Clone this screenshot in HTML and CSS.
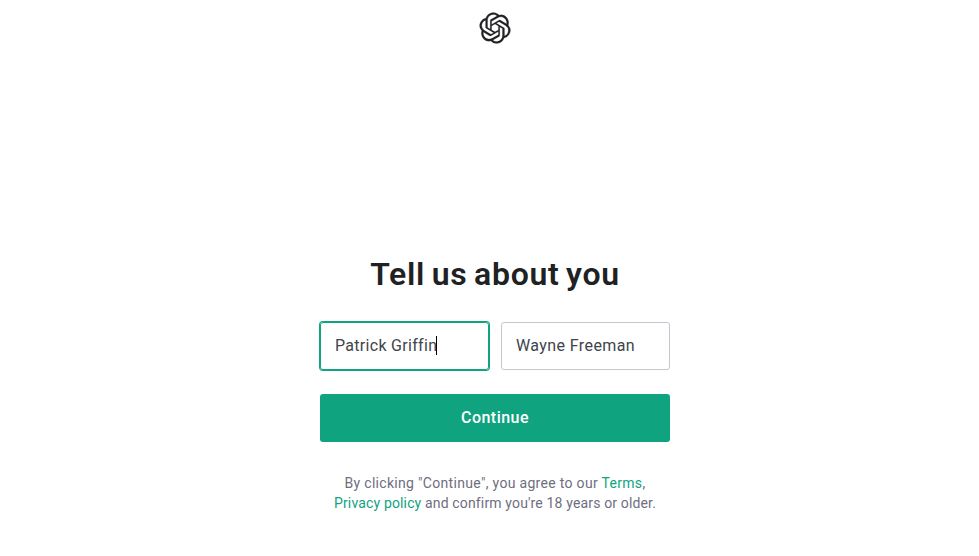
FILE: index.html
```html
<!DOCTYPE html>
<html lang="en">
<head>
    <meta charset="UTF-8">
    <meta name="viewport" content="width=device-width, initial-scale=1.0">
    <title>Tell us about you</title>
    <link rel="stylesheet" href="styles.css">
</head>
<body>
    <header class="header">
        <svg class="logo" viewBox="0 0 24 24" fill="currentColor" aria-hidden="true">
            <path d="M22.2819 9.8211a5.9847 5.9847 0 0 0-.5157-4.9108 6.0462 6.0462 0 0 0-6.5098-2.9A6.0651 6.0651 0 0 0 4.9807 4.1818a5.9847 5.9847 0 0 0-3.9977 2.9 6.0462 6.0462 0 0 0 .7427 7.0966 5.98 5.98 0 0 0 .511 4.9107 6.051 6.051 0 0 0 6.5146 2.9001A5.9847 5.9847 0 0 0 13.2599 24a6.0557 6.0557 0 0 0 5.7718-4.2058 5.9894 5.9894 0 0 0 3.9977-2.9001 6.0557 6.0557 0 0 0-.7475-7.0729zm-9.022 12.6081a4.4755 4.4755 0 0 1-2.8764-1.0408l.1419-.0804 4.7783-2.7582a.7948.7948 0 0 0 .3927-.6813v-6.7369l2.02 1.1686a.071.071 0 0 1 .038.052v5.5826a4.504 4.504 0 0 1-4.4945 4.4944zm-9.6607-4.1254a4.4708 4.4708 0 0 1-.5346-3.0137l.142.0852 4.783 2.7582a.7712.7712 0 0 0 .7806 0l5.8428-3.3685v2.3324a.0804.0804 0 0 1-.0332.0615L9.74 19.9502a4.4992 4.4992 0 0 1-6.1408-1.6464zM2.3408 7.8956a4.485 4.485 0 0 1 2.3655-1.9728V11.6a.7664.7664 0 0 0 .3879.6765l5.8144 3.3543-2.0201 1.1685a.0757.0757 0 0 1-.071 0l-4.8303-2.7865A4.504 4.504 0 0 1 2.3408 7.872zm16.5963 3.8558L13.1038 8.364 15.1192 7.2a.0757.0757 0 0 1 .071 0l4.8303 2.7913a4.4944 4.4944 0 0 1-.6765 8.1042v-5.6772a.79.79 0 0 0-.407-.667zm2.0107-3.0231l-.142-.0852-4.7735-2.7818a.7759.7759 0 0 0-.7854 0L9.409 9.2297V6.8974a.0662.0662 0 0 1 .0284-.0615l4.8303-2.7866a4.4992 4.4992 0 0 1 6.6802 4.66zM8.3065 12.863l-2.02-1.1638a.0804.0804 0 0 1-.038-.0567V6.0742a4.4992 4.4992 0 0 1 7.3757-3.4537l-.142.0805L8.704 5.459a.7948.7948 0 0 0-.3927.6813zm1.0976-2.3654l2.602-1.4998 2.6069 1.4998v2.9994l-2.5974 1.4997-2.6067-1.4997Z"/>
        </svg>
    </header>

    <main class="content">
        <h1 class="title">Tell us about you</h1>
        <form class="about-form">
            <div class="name-row">
                <div class="form-control focused">Patrick Griffin<span class="caret"></span></div>
                <div class="form-control last-name">Wayne Freeman</div>
            </div>
            <button type="button" class="btn-primary">Continue</button>
        </form>
        <p class="terms">
            <span class="terms-first">By clicking "Continue", you agree to our <a href="#">Terms</a>,</span><br>
            <span class="terms-second"><a href="#">Privacy policy</a> and confirm you're 18 years or older.</span>
        </p>
    </main>
</body>
</html>
```
FILE: styles.css
```css
* {
    box-sizing: border-box;
}

body {
    margin: 0;
    padding-left: 11px;
    background-color: #fff;
    color: #202123;
    font-family: Roboto, "Liberation Sans", sans-serif;
}

.header {
    display: flex;
    justify-content: center;
    height: 44px;
    padding-top: 12px;
}

.logo {
    width: 32px;
    height: 32px;
    padding: 0.5px;
    overflow: visible;
    stroke: currentColor;
    stroke-width: 0.15;
}

.content {
    width: 350px;
    margin: 210px auto 0;
}

.title {
    margin: 0;
    font-size: 32px;
    line-height: 40px;
    font-weight: 600;
    text-align: center;
    white-space: nowrap;
    letter-spacing: 0.7px;
    word-spacing: -2px;
}

.about-form {
    margin-top: 28px;
}

.name-row {
    display: grid;
    grid-template-columns: 169px 169px;
    justify-content: space-between;
}

.form-control {
    display: flex;
    align-items: center;
    height: 48px;
    padding: 0 14px 2px;
    border: 1px solid #c2c8d0;
    border-radius: 3px;
    color: #40444b;
    font-size: 16px;
    letter-spacing: 0.3px;
    white-space: nowrap;
}

.last-name {
    letter-spacing: 0.4px;
}

.focused {
    border-color: #10a37f;
    box-shadow: 0 0 0 1px #10a37f;
}

.caret {
    width: 1px;
    height: 19px;
    margin-left: -1px;
    background-color: #000;
}

.btn-primary {
    display: block;
    width: 100%;
    height: 48px;
    margin-top: 24px;
    padding: 0 0 2px;
    border: none;
    border-radius: 3px;
    background-color: #10a37f;
    color: #fff;
    font-family: inherit;
    font-size: 16px;
    font-weight: 500;
    letter-spacing: 0.45px;
}

.terms {
    margin: 31px 0 0;
    color: #6e6e80;
    font-size: 14px;
    line-height: 20px;
    text-align: center;
    white-space: nowrap;
}

.terms-first {
    letter-spacing: 0.31px;
}

.terms-second {
    letter-spacing: 0.15px;
}

.terms a {
    color: #10a37f;
    text-decoration: none;
}
```
